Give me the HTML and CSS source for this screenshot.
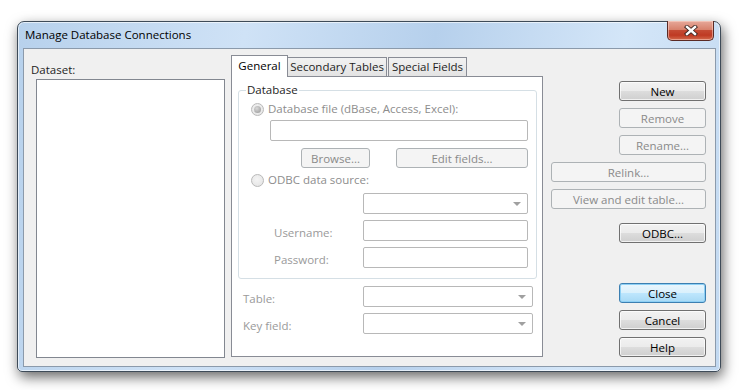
FILE: index.html
```html
<!DOCTYPE html>
<html lang="en">
<head>
  <meta charset="UTF-8" />
  <title>Manage Database Connections</title>
  <link rel="stylesheet" href="styles.css">
</head>
<body>
  <div class="window">
    <div class="titlebar">
      <span class="title">Manage Database Connections</span>
      <button class="close-btn" aria-label="Close">
        <svg width="14" height="11" viewBox="0 0 14 11">
          <path d="M3 2 L11 9 M11 2 L3 9" stroke="#3b2420" stroke-width="4.2" stroke-linecap="square" fill="none"/>
          <path d="M3 2 L11 9 M11 2 L3 9" stroke="#ffffff" stroke-width="2.4" stroke-linecap="square" fill="none"/>
        </svg>
      </button>
    </div>

    <div class="client">
      <div class="dataset-col">
        <div class="dataset-label">Dataset:</div>
        <div class="listbox"></div>
      </div>

      <div class="tabs-col">
        <div class="tab-strip">
          <div class="tab active">General</div>
          <div class="tab tab-secondary">Secondary Tables</div>
          <div class="tab tab-special">Special Fields</div>
        </div>
        <div class="tab-panel">
          <fieldset class="group">
            <legend>Database</legend>
            <div class="radio-row"><span class="radio checked"></span>Database file (dBase, Access, Excel):</div>
            <div class="textbox file-box"></div>
            <div class="btn-row">
              <button class="btn browse" disabled>Browse...</button>
              <button class="btn edit" disabled>Edit fields...</button>
            </div>
            <div class="radio-row odbc-row"><span class="radio"></span>ODBC data source:</div>
            <div class="field-row first">
              <span class="field-label"></span>
              <div class="combo"></div>
            </div>
            <div class="field-row">
              <span class="field-label">Username:</span>
              <div class="textbox"></div>
            </div>
            <div class="field-row">
              <span class="field-label">Password:</span>
              <div class="textbox"></div>
            </div>
          </fieldset>

          <div class="field-row table-row">
            <span class="field-label">Table:</span>
            <div class="combo wide"></div>
          </div>
          <div class="field-row table-row">
            <span class="field-label">Key field:</span>
            <div class="combo wide"></div>
          </div>
        </div>
      </div>

      <div class="buttons-col">
        <button class="btn small">New</button>
        <button class="btn small" disabled>Remove</button>
        <button class="btn small" disabled>Rename...</button>
        <button class="btn" disabled>Relink...</button>
        <button class="btn" disabled>View and edit table...</button>
        <button class="btn small odbc">ODBC...</button>
        <div class="spacer"></div>
        <button class="btn small default">Close</button>
        <button class="btn small">Cancel</button>
        <button class="btn small">Help</button>
      </div>
    </div>
  </div>
</body>
</html>
```

FILE: styles.css
```css
* {
  box-sizing: border-box;
}

body {
  margin: 0;
  width: 740px;
  height: 390px;
  overflow: hidden;
  background: #ffffff;
  font-family: "Open Sans", "Noto Sans", sans-serif;
  font-size: 11.5px;
  color: #1e1e1e;
}

/* window frame */
.window {
  margin: 21px 0 0 17px;
  width: 704px;
  height: 351px;
  border: 1px solid #3e4b58;
  border-radius: 7px 7px 5px 5px;
  padding: 0 4px 4px 5px;
  background: linear-gradient(100deg, #b7d1ec 0%, #cfe2f6 30%, #b6d0ec 55%, #d4e6f8 80%, #c2d9f1 100%);
  box-shadow: 2px 5px 13px rgba(0, 0, 0, 0.6), inset 0 0 0 1px rgba(255, 255, 255, 0.6);
}

.titlebar {
  height: 26px;
  display: flex;
  align-items: flex-start;
}

.title {
  padding: 5px 0 0 2px;
  font-size: 11.5px;
  color: #000;
}

.close-btn {
  margin: -1px 2px 0 auto;
  width: 47px;
  height: 20px;
  padding: 0;
  border: 1px solid #5a2a24;
  border-top: none;
  border-radius: 0 0 5px 5px;
  background: linear-gradient(#e6a89a 0%, #d8826d 45%, #c44a33 50%, #bf3a23 75%, #d36a4c 100%);
  box-shadow: inset 0 0 0 1px rgba(255, 220, 210, 0.5);
  display: flex;
  align-items: center;
  justify-content: center;
}

/* client area */
.client {
  height: 319px;
  border: 1px solid #8b9aab;
  background: #f0f0f0;
  display: flex;
  padding: 0 9px 9px 7px;
}

.dataset-col {
  width: 194px;
  padding-top: 13px;
}

.dataset-label {
  line-height: 16px;
}

.listbox {
  margin: 1px 0 0 5px;
  width: 189px;
  height: 279px;
  border: 1px solid #828790;
  background: #ffffff;
}

/* tab control */
.tabs-col {
  margin-left: 6px;
  width: 312px;
  padding-top: 6px;
}

.tab-strip {
  display: flex;
  height: 21px;
  align-items: flex-end;
}

.tab {
  height: 19px;
  border: 1px solid #898c95;
  border-bottom: none;
  background: linear-gradient(#f2f2f2, #e3e3e3);
  text-align: center;
  line-height: 18px;
  margin-left: -1px;
}

.tab.active {
  position: relative;
  z-index: 1;
  height: 22px;
  margin: 0 0 -1px 0;
  width: 57px;
  background: #ffffff;
  line-height: 19px;
  color: #000;
}

.tab-secondary {
  width: 100px;
}

.tab-special {
  width: 79px;
  margin-left: 1px;
}

.tab-panel {
  height: 281px;
  border: 1px solid #898c95;
  background: #ffffff;
}

/* group box */
.group {
  margin: 6px 5px 0 6px;
  padding: 4px 8px 10px 12px;
  border: 1px solid #d5dfe5;
  border-radius: 3px;
  min-width: 0;
}

.group legend {
  margin-left: -5px;
  padding: 0 1px;
  line-height: 14px;
  color: #1e1e1e;
}

.radio-row {
  display: flex;
  align-items: center;
  line-height: 16px;
  color: #8d8d8d;
}

.odbc-row {
  margin-top: 4px;
}

.radio {
  width: 13px;
  height: 13px;
  margin-right: 4px;
  border-radius: 50%;
  border: 1px solid #b9b9b9;
  background: radial-gradient(circle at 45% 40%, #f4f4f4 0%, #e2e2e2 100%);
  display: flex;
  align-items: center;
  justify-content: center;
}

.radio.checked::after {
  content: "";
  width: 7px;
  height: 7px;
  border-radius: 50%;
  background: radial-gradient(circle at 40% 35%, #d8d8d8 0%, #a9a9a9 70%, #9a9a9a 100%);
}

.textbox,
.combo {
  height: 21px;
  border: 1px solid #b8b8b8;
  border-radius: 2px;
  background: #ffffff;
}

.file-box {
  margin: 3px 0 0 19px;
}

.btn-row {
  display: flex;
  justify-content: flex-end;
  gap: 26px;
  margin-top: 7px;
}

.field-row {
  display: flex;
  align-items: center;
  margin-top: 6px;
}

.field-row.first {
  margin-top: 5px;
}

.field-label {
  margin-left: 23px;
  padding-top: 3px;
  color: #9a9a9a;
}

.field-row .textbox,
.field-row .combo {
  margin-left: auto;
  width: 165px;
}

.combo {
  position: relative;
}

.combo::after {
  content: "";
  position: absolute;
  right: 6px;
  top: 8px;
  border-left: 4px solid transparent;
  border-right: 4px solid transparent;
  border-top: 4px solid #a0a0a0;
}

.table-row {
  margin: 6px 9px 0 11px;
}

.table-row:first-of-type {
  margin-top: 7px;
}

.table-row .field-label {
  margin-left: 0;
}

.field-row .combo.wide {
  width: 170px;
}

/* buttons */
.btn {
  height: 20px;
  padding: 0;
  font-family: inherit;
  font-size: 11.5px;
  color: #000;
  border: 1px solid #707070;
  border-radius: 3px;
  background: linear-gradient(#f2f2f2 0%, #ebebeb 50%, #dddddd 51%, #cfcfcf 100%);
  box-shadow: inset 0 0 0 1px rgba(255, 255, 255, 0.7);
}

.btn:disabled {
  color: #8a8a8a;
  border-color: #adb2b5;
  background: #f4f4f4;
  box-shadow: none;
}

.browse {
  width: 69px;
}

.edit {
  width: 132px;
}

.buttons-col {
  margin-left: 8px;
  width: 155px;
  padding-top: 32px;
  display: flex;
  flex-direction: column;
  align-items: flex-end;
  gap: 7px;
}

.buttons-col .btn {
  width: 155px;
  flex-shrink: 0;
}

.buttons-col .btn.small {
  width: 87px;
}

.buttons-col .odbc {
  margin-top: 7px;
}

.spacer {
  flex: 1;
}

.btn.default {
  border-color: #3c7fb1;
  background: linear-gradient(#eaf6fd 0%, #d9f0fc 50%, #bee6fd 51%, #a7d9f5 100%);
  box-shadow: inset 0 0 0 1px #8ed0f5;
}
```
